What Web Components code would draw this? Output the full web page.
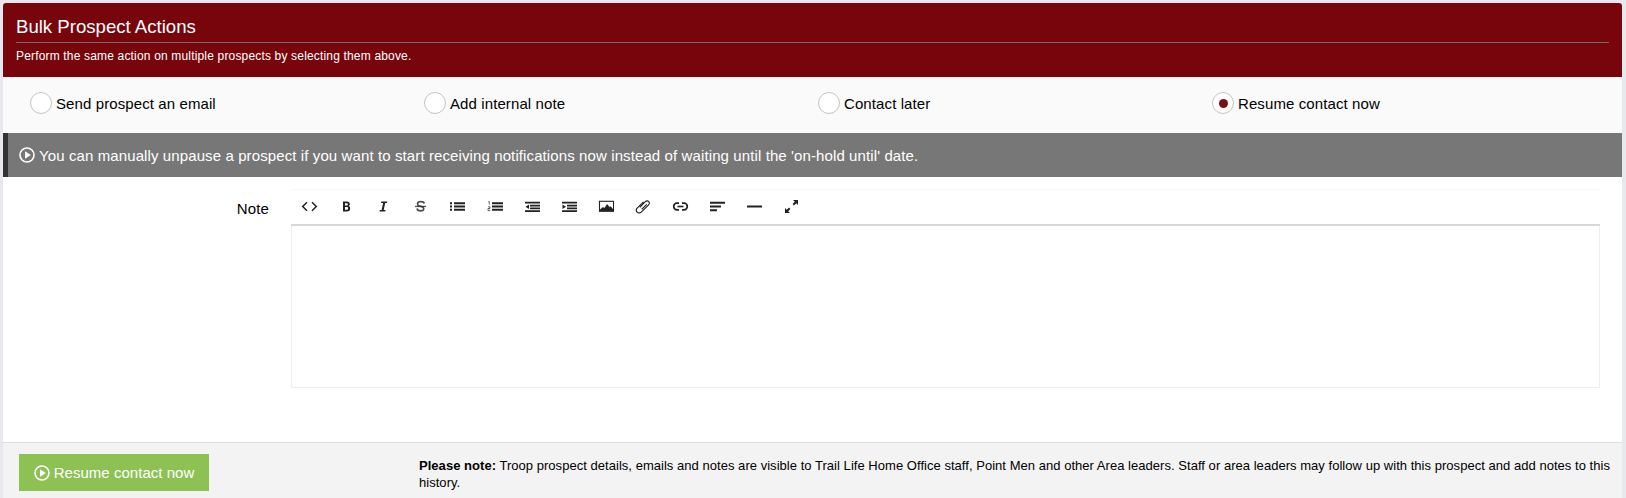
<!DOCTYPE html>
<html>
<head>
<meta charset="utf-8">
<title>Bulk Prospect Actions</title>
<style>
  html, body { margin: 0; height: 100%; }
  body {
    background: #e8e9ee;
    font-family: "Liberation Sans", Arial, sans-serif;
    color: #000;
    overflow: hidden;
  }
</style>
</head>
<body>

<bulk-panel>
  <bulk-header slot="header" title-text="Bulk Prospect Actions">Perform the same action on multiple prospects by selecting them above.</bulk-header>
  <action-radio>Send prospect an email</action-radio>
  <action-radio>Add internal note</action-radio>
  <action-radio>Contact later</action-radio>
  <action-radio checked>Resume contact now</action-radio>
  <info-banner slot="banner">You can manually unpause a prospect if you want to start receiving notifications now instead of waiting until the 'on-hold until' date.</info-banner>
  <note-editor slot="editor" label="Note"></note-editor>
  <action-footer slot="footer" button="Resume contact now"><b>Please note:</b> Troop prospect details, emails and notes are visible to Trail Life Home Office staff, Point Men and other Area leaders. Staff or area leaders may follow up with this prospect and add notes to this<br>history.</action-footer>
</bulk-panel>

<script>
// play icon shared by the banner and the button
const PLAY_ICON = `<svg viewBox="0 0 16 16" width="16" height="16" aria-hidden="true">
  <circle cx="8" cy="8" r="7" fill="none" stroke="currentColor" stroke-width="1.6"/>
  <path d="M6 4.200 L11.800 8 L6 11.800 Z" fill="currentColor"/>
</svg>`;

class BulkPanel extends HTMLElement {
  constructor() {
    super();
    this.attachShadow({ mode: 'open' });
    this.shadowRoot.innerHTML = `
      <style>
        :host {
          display: flex;
          flex-direction: column;
          height: 495px;
          margin: 3px 4px 0 3px;
          background: #fff;
          border-radius: 3px 3px 0 0;
          overflow: hidden;
        }
        .radios {
          display: grid;
          grid-template-columns: repeat(4, 394px);
          align-items: center;
          height: 52px;
          padding: 0 0 4px 27px;
          background: #fafafa;
        }
        .grow { flex: 1; }
      </style>
      <slot name="header"></slot>
      <div class="radios"><slot></slot></div>
      <slot name="banner"></slot>
      <slot name="editor"></slot>
      <div class="grow"></div>
      <slot name="footer"></slot>
    `;
  }
}

class BulkHeader extends HTMLElement {
  constructor() {
    super();
    this.attachShadow({ mode: 'open' });
    this.shadowRoot.innerHTML = `
      <style>
        :host {
          display: block;
          box-sizing: border-box;
          height: 74px;
          padding: 0 13px 0 13px;
          background: #78050c;
          color: #fff;
        }
        h1 {
          margin: 0;
          height: 40px;
          box-sizing: border-box;
          padding-top: 14px;
          font-size: 18.6px;
          line-height: 20px;
          font-weight: normal;
          border-bottom: 1px solid #6e6e6e;
        }
        p {
          margin: 0;
          padding-top: 6px;
          font-size: 12px;
          line-height: 14px;
          letter-spacing: .17px;
        }
      </style>
      <h1></h1>
      <p><slot></slot></p>
    `;
    this.shadowRoot.querySelector('h1').textContent = this.getAttribute('title-text');
  }
}

class ActionRadio extends HTMLElement {
  constructor() {
    super();
    this.attachShadow({ mode: 'open' });
    this.shadowRoot.innerHTML = `
      <style>
        :host {
          display: flex;
          align-items: center;
          font-size: 15px;
          letter-spacing: .1px;
          cursor: pointer;
        }
        .dot {
          box-sizing: border-box;
          display: flex;
          align-items: center;
          justify-content: center;
          width: 22px;
          height: 22px;
          margin-right: 4px;
          border: 1px solid #c4c4c4;
          border-radius: 50%;
          background: #fff;
        }
        :host([checked]) .dot::after {
          content: '';
          width: 9px;
          height: 9px;
          border-radius: 50%;
          background: #78101a;
        }
      </style>
      <span class="dot"></span>
      <slot></slot>
    `;
  }
}

class InfoBanner extends HTMLElement {
  constructor() {
    super();
    this.attachShadow({ mode: 'open' });
    this.shadowRoot.innerHTML = `
      <style>
        :host {
          display: flex;
          align-items: center;
          box-sizing: border-box;
          height: 44px;
          padding-left: 11px;
          background: #777;
          border-left: 5px solid #333;
          color: #fff;
          font-size: 15px;
          letter-spacing: .107px;
        }
        svg { margin-right: 4px; flex: none; }
      </style>
      ${PLAY_ICON}
      <span><slot></slot></span>
    `;
  }
}

// toolbar glyphs, drawn in a 17 box
const TOOL_ICONS = {
  code: '<path d="M6 4.200 L1.700 8.500 L6 12.800 M11 4.200 L15.300 8.500 L11 12.800" fill="none" stroke="currentColor" stroke-width="1.500"/>',
  bold: '<path fill-rule="evenodd" d="M5 3.500h4c1.800 0 2.800 1 2.800 2.400 0 1-.5 1.700-1.300 2.100 1 .3 1.700 1.200 1.700 2.400 0 1.800-1.200 3-3.200 3H5zM7 5.200v2.300h1.600c.7 0 1.200-.4 1.200-1.100 0-.8-.5-1.200-1.200-1.200zM7 9.100v2.700h1.800c.8 0 1.300-.5 1.300-1.400 0-.8-.5-1.300-1.300-1.300z" fill="currentColor"/>',
  italic: '<path d="M6.300 3.500h6l-.3 1.500h-1.800l-1.500 7h1.800l-.3 1.500H4.500l.3-1.500h1.800l1.500-7H6z" fill="currentColor"/>',
  strike: '<path d="M12.300 5.500C11.900 4.200 10.500 3.700 8.800 3.700 6.800 3.700 5.500 4.600 5.500 5.900c0 1 .6 1.700 2 2.100l2.400.8c1.200.4 1.800 1 1.800 1.900 0 1.300-1.300 2.100-3 2.100-1.900 0-3.400-.8-3.700-2.300" fill="none" stroke="currentColor" stroke-width="1.700" opacity=".8"/><rect x="3" y="7.800" width="11" height="1.300" fill="currentColor" opacity=".8"/>',
  ul: '<path d="M1 4.200h2v2H1zM1 7.500h2v2H1zM1 10.800h2v2H1zM5 4.200h11v2H5zM5 7.500h11v2H5zM5 10.800h11v2H5z" fill="currentColor"/>',
  ol: '<path d="M5 4.200h11v2H5zM5 7.500h11v2H5zM5 10.800h11v2H5z" fill="currentColor"/><path d="M1.300 3.600h1v3M1 8.800h2v1.700H1V12.600h2.200" fill="none" stroke="currentColor" stroke-width=".7"/>',
  outdent: '<path d="M1 3.800h15v1.700H1zM6 6.700h10v1.700H6zM6 9.500h10v1.700H6zM1 12.300h15V14H1z" fill="currentColor"/><path d="M5 6.500v4.500L1.500 8.800z" fill="currentColor"/>',
  indent: '<path d="M1 3.800h15v1.700H1zM6 6.700h10v1.700H6zM6 9.500h10v1.700H6zM1 12.300h15V14H1z" fill="currentColor"/><path d="M1.500 6.500v4.500L5 8.800z" fill="currentColor"/>',
  image: '<rect x="1.500" y="3.300" width="14" height="10" fill="none" stroke="currentColor" stroke-width="1.100"/><path d="M2 13v-1.500l3-2.500 1.500 1L9 6l2.500 3 1 -.8L15 11v2z" fill="currentColor"/>',
  link: '<path d="M4.800 9.300 10.400 3.700c1-1 2.500-1 3.300-.1.900.9.800 2.300-.1 3.200L6.500 13.900c-1.400 1.400-3.400 1.300-4.400.2-1-1.100-1-2.900.3-4.200L8.500 3.800M6.700 11.300 11.700 6.300" fill="none" stroke="currentColor" stroke-width="1.150"/>',
  unlink: '<path d="M7 5.200H5a3.300 3.300 0 0 0 0 6.600h2M10 5.200h2a3.300 3.300 0 0 1 0 6.600h-2" fill="none" stroke="currentColor" stroke-width="1.700"/><rect x="5.500" y="7.700" width="6" height="1.600" fill="currentColor"/>',
  align: '<path d="M1 3.800h15v2H1zM1 7.500h11v2H1zM1 11.200h7v2H1z" fill="currentColor"/>',
  hr: '<rect x="1" y="7.500" width="15" height="2" fill="currentColor"/>',
  full: '<path d="M10 2h5v5l-1.800-1.800L11 7.400 9.600 6l2.200-2.200zM7 15H2v-5l1.800 1.800L6 9.600 7.400 11l-2.200 2.200z" fill="currentColor"/>'
};

class ToolIcon extends HTMLElement {
  constructor() {
    super();
    this.attachShadow({ mode: 'open' });
    const name = this.getAttribute('name');
    this.shadowRoot.innerHTML = `
      <style>
        :host {
          display: flex;
          align-items: center;
          justify-content: center;
          width: 37.1px;
          height: 35px;
          color: #222;
        }
        svg { display: block; }
      </style>
      <svg viewBox="0 0 17 17" width="17" height="17">${TOOL_ICONS[name] || ''}</svg>
    `;
  }
}

class NoteEditor extends HTMLElement {
  constructor() {
    super();
    this.attachShadow({ mode: 'open' });
    const names = ['code', 'bold', 'italic', 'strike', 'ul', 'ol', 'outdent', 'indent', 'image', 'link', 'unlink', 'align', 'hr', 'full'];
    this.shadowRoot.innerHTML = `
      <style>
        :host {
          display: flex;
          align-items: flex-start;
          padding: 12px 22px 0 0;
        }
        label {
          width: 288px;
          padding: 11px 22px 0 0;
          box-sizing: border-box;
          text-align: right;
          font-size: 15px;
          letter-spacing: .15px;
          line-height: 17px;
          flex: none;
        }
        .box { flex: 1; }
        .toolbar {
          display: flex;
          height: 34px;
          background: #fff;
          border-bottom: 2px solid #d7d7d7;
          border-top: 1px solid #f8f8f8;
        }
        tool-icon { margin-top: -1px; }
        .area {
          height: 161px;
          border: 1px solid #eee;
          border-top: 0;
          background: #fff;
        }
      </style>
      <label></label>
      <div class="box">
        <div class="toolbar">${names.map(n => `<tool-icon name="${n}"></tool-icon>`).join('')}</div>
        <div class="area" contenteditable="true"></div>
      </div>
    `;
    this.shadowRoot.querySelector('label').textContent = this.getAttribute('label');
  }
}

class ActionFooter extends HTMLElement {
  constructor() {
    super();
    this.attachShadow({ mode: 'open' });
    this.shadowRoot.innerHTML = `
      <style>
        :host {
          display: flex;
          align-items: flex-start;
          box-sizing: border-box;
          height: 56px;
          padding: 11px 8px 0 16px;
          background: #f3f3f3;
          border-top: 1px solid #ddd;
        }
        button {
          display: flex;
          align-items: center;
          justify-content: center;
          width: 190px;
          height: 37px;
          padding: 0;
          border: 0;
          background: #8dc153;
          color: #fff;
          font: 15px "Liberation Sans", Arial, sans-serif;
          letter-spacing: .03px;
          flex: none;
        }
        button svg { margin-right: 4px; }
        .note {
          margin-left: 210px;
          padding-top: 3px;
          font-size: 13px;
          letter-spacing: .035px;
          line-height: 17px;
        }
      </style>
      <button>${PLAY_ICON}<span class="label"></span></button>
      <div class="note"><slot></slot></div>
    `;
    this.shadowRoot.querySelector('.label').textContent = this.getAttribute('button');
  }
}

customElements.define('bulk-panel', BulkPanel);
customElements.define('bulk-header', BulkHeader);
customElements.define('action-radio', ActionRadio);
customElements.define('info-banner', InfoBanner);
customElements.define('tool-icon', ToolIcon);
customElements.define('note-editor', NoteEditor);
customElements.define('action-footer', ActionFooter);
</script>
</body>
</html>
